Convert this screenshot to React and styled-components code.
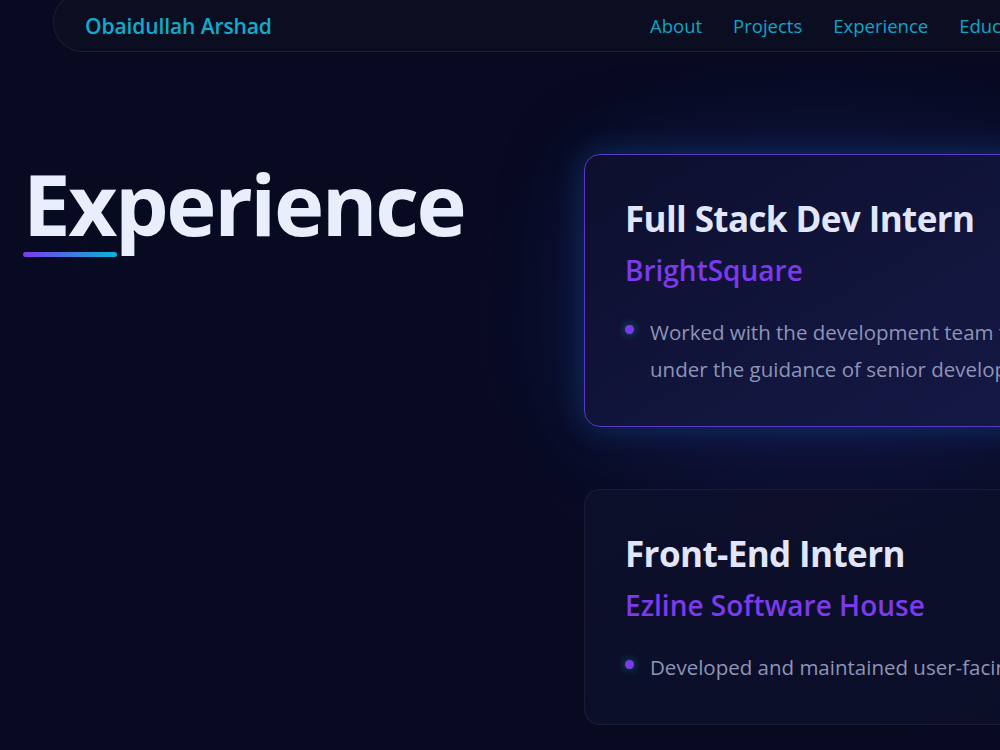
import React from 'react';
import styled, { createGlobalStyle } from 'styled-components';

const GlobalStyle = createGlobalStyle`
  html, body {
    margin: 0;
    padding: 0;
    background: #070a20;
    overflow: hidden;
  }

  body {
    font-family: "Open Sans", "Noto Sans", sans-serif;
    color: #e5eaf8;
  }
`;

const Page = styled.div`
  width: 1000px;
  height: 750px;
  overflow: hidden;
  background:
    radial-gradient(ellipse 520px 420px at 820px 330px, rgba(40, 44, 130, 0.3), transparent 70%),
    #070a20;
`;

const Nav = styled.nav`
  display: flex;
  align-items: center;
  width: 1180px;
  height: 60px;
  margin: -8px 0 0 53px;
  padding: 7px 0 0 31px;
  box-sizing: border-box;
  background: #0b0e20;
  border: 1px solid rgba(255, 255, 255, 0.07);
  border-radius: 30px;
`;

const Brand = styled.a`
  flex: 0 0 565px;
  font-size: 21px;
  font-weight: 600;
  color: #10abcc;
  letter-spacing: -0.1px;
`;

const Links = styled.ul`
  display: flex;
  gap: 31px;
  margin: 0;
  padding: 0;
  list-style: none;
`;

const LinkItem = styled.li`
  font-size: 18.5px;
  color: #0ea5c9;
  white-space: nowrap;
`;

const Section = styled.section`
  display: grid;
  grid-template-columns: 561px 620px;
  align-items: start;
  padding: 102px 0 0 23px;
`;

const TitleBlock = styled.div`
  padding-top: 5px;
`;

const Heading = styled.h2`
  margin: 0;
  font-size: 85px;
  line-height: 88px;
  font-weight: 700;
  letter-spacing: -2.4px;
  color: #e8eefb;
`;

const Underline = styled.div`
  width: 94px;
  height: 5px;
  margin-top: 5px;
  border-radius: 3px;
  background: linear-gradient(90deg, #7c3aed, #06b6d4);
`;

const CardList = styled.div`
  display: flex;
  flex-direction: column;
  gap: 62px;
`;

const Card = styled.article`
  padding: 44px 40px 38px;
  border-radius: 16px;
  border: 1px solid ${p => (p.$active ? '#5a38c8' : 'rgba(255, 255, 255, 0.06)')};
  background: ${p =>
    p.$active
      ? 'linear-gradient(150deg, #0d0f2e 0%, #13163f 60%, #151a47 100%)'
      : 'linear-gradient(150deg, rgba(14, 16, 44, 0.9) 0%, rgba(12, 14, 40, 0.9) 100%)'};
  box-shadow: ${p =>
    p.$active
      ? '0 0 30px rgba(10, 100, 170, 0.4), 0 0 90px rgba(40, 50, 160, 0.22)'
      : 'none'};
`;

const Role = styled.h3`
  margin: 0;
  font-size: 35px;
  line-height: 40px;
  font-weight: 700;
  letter-spacing: -0.6px;
  color: #e2e6fa;
`;

const Company = styled.div`
  margin-top: 13px;
  font-size: 28px;
  line-height: 36px;
  font-weight: 600;
  color: #7c3aed;
`;

const Points = styled.ul`
  margin: 26px 0 0;
  padding: 0;
  list-style: none;
`;

const Point = styled.li`
  display: flex;
  gap: 16px;
  font-size: 20.5px;
  line-height: 37px;
  color: #8e94b7;

  &::before {
    content: '';
    flex: 0 0 9px;
    height: 9px;
    margin-top: 11px;
    border-radius: 50%;
    background: #7c3aed;
    box-shadow: 0 0 8px rgba(6, 182, 212, 0.55);
  }
`;

const jobs = [
  {
    role: 'Full Stack Dev Intern',
    company: 'BrightSquare',
    points: [
      'Worked with the development team to build features under the guidance of senior developers.',
    ],
    active: true,
  },
  {
    role: 'Front-End Intern',
    company: 'Ezline Software House',
    points: ['Developed and maintained user-facing web pages.'],
  },
];

export default function App() {
  return (
    <Page>
      <GlobalStyle />
      <Nav>
        <Brand>Obaidullah Arshad</Brand>
        <Links>
          <LinkItem>About</LinkItem>
          <LinkItem>Projects</LinkItem>
          <LinkItem>Experience</LinkItem>
          <LinkItem>Education</LinkItem>
          <LinkItem>Contact</LinkItem>
        </Links>
      </Nav>
      <Section>
        <TitleBlock>
          <Heading>Experience</Heading>
          <Underline />
        </TitleBlock>
        <CardList>
          {jobs.map(job => (
            <Card key={job.role} $active={job.active}>
              <Role>{job.role}</Role>
              <Company>{job.company}</Company>
              <Points>
                {job.points.map(pt => (
                  <Point key={pt}>{pt}</Point>
                ))}
              </Points>
            </Card>
          ))}
        </CardList>
      </Section>
    </Page>
  );
}
